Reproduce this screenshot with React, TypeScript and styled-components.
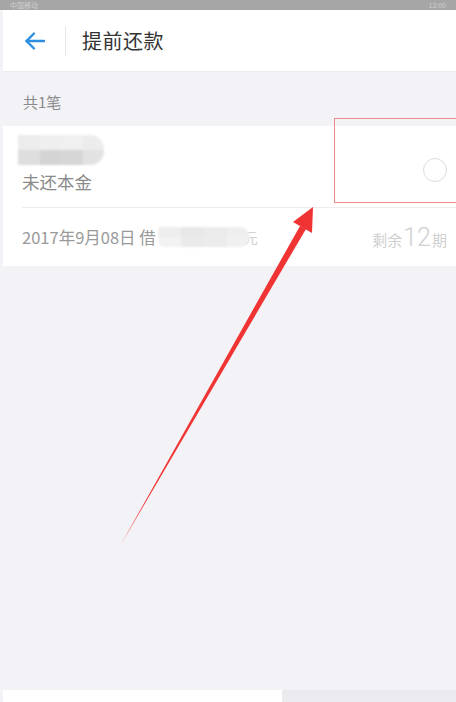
import React from "react";
import styled, { createGlobalStyle } from "styled-components";

const Global = createGlobalStyle`
  html, body { margin: 0; padding: 0; background: #f3f3f7; }
  body { font-family: "Noto Sans CJK SC", "Noto Sans", sans-serif; }
  * { box-sizing: border-box; }
`;

const Screen = styled.div`
  position: relative;
  width: 456px;
  height: 702px;
  overflow: hidden;
  background: #f3f3f7;
  display: flex;
  flex-direction: column;
`;

const StatusBar = styled.div`
  height: 10px;
  background: #a6a6a6;
  display: flex;
  align-items: center;
  justify-content: space-between;
  padding: 0 10px;
  font-size: 7px;
  line-height: 7px;
  color: #d0d0d0;
  overflow: hidden;
`;

const Body = styled.div`
  flex: 1;
  display: flex;
  flex-direction: column;
  padding-left: 3px;
`;

const Header = styled.div`
  height: 62px;
  background: #fff;
  display: flex;
  align-items: center;
  border-bottom: 1px solid #ececf0;
`;

const Back = styled.div`
  width: 62px;
  display: flex;
  align-items: center;
  padding-left: 20px;
`;

const VDivider = styled.div`
  width: 1px;
  height: 30px;
  background: #e6e6e6;
`;

const Title = styled.div`
  margin-left: 16px;
  font-size: 20px;
  color: #333;
  letter-spacing: 0.5px;
`;

const Count = styled.div`
  padding: 19px 0 0 20px;
  height: 54px;
  font-size: 15px;
  color: #8a8a8a;
`;

const Card = styled.div`
  background: #fff;
  display: flex;
  flex-direction: column;
`;

const TopRow = styled.div`
  height: 82px;
  margin-left: 19px;
  display: flex;
  align-items: center;
  justify-content: space-between;
  border-bottom: 1px solid #ededed;
  padding-right: 9px;
`;

const Info = styled.div`
  display: flex;
  flex-direction: column;
  gap: 4px;
  margin-top: -4px;
`;

const Mosaic = styled.div<{ w: number; h: number; cols: number }>`
  width: ${(p) => p.w}px;
  height: ${(p) => p.h}px;
  display: grid;
  grid-template-columns: repeat(${(p) => p.cols}, 1fr);
  border-radius: 0 14px 14px 0;
  overflow: hidden;
  filter: blur(0.8px);
`;

const Cell = styled.div<{ c: string }>`
  background: ${(p) => p.c};
`;

const Label = styled.div`
  font-size: 17.5px;
  color: #8a8a8a;
`;

const Radio = styled.div`
  width: 24px;
  height: 24px;
  border-radius: 50%;
  border: 1.5px solid #dcdcdc;
  margin-top: 6px;
`;

const BottomRow = styled.div`
  height: 58px;
  padding: 0 9px 0 19px;
  display: flex;
  align-items: center;
  justify-content: space-between;
`;

const DateText = styled.div`
  display: flex;
  align-items: center;
  font-size: 16.5px;
  color: #9a9a9a;
  gap: 2px;
`;

const Faint = styled.span`
  color: #d0d0d0;
  font-size: 14px;
  margin-left: -8px;
`;

const Remain = styled.div`
  color: #d0d0d0;
  font-size: 15px;
  display: flex;
  align-items: baseline;
`;

const Big = styled.span`
  font-size: 25px;
  font-family: "Roboto", "Noto Sans", sans-serif;
  font-weight: 300;
  margin: 0 1px;
`;

const Spacer = styled.div`
  flex: 1;
`;

const Footer = styled.div`
  height: 12px;
  display: flex;
`;

const FooterLeft = styled.div`
  width: 279px;
  background: #fff;
`;

const FooterRight = styled.div`
  flex: 1;
  background: #eaeaef;
`;

const HighlightBox = styled.div`
  position: absolute;
  left: 334px;
  top: 118px;
  width: 130px;
  height: 85px;
  border: 1.5px solid #f08a8a;
  pointer-events: none;
`;

const ArrowSvg = styled.svg`
  position: absolute;
  left: 0;
  top: 0;
  pointer-events: none;
`;

const topCells = ["#ececec", "#efefef", "#f0f0f0", "#ececec", "#dedede", "#d4d4d4", "#d6d6d6", "#e2e2e2"];
const dateCells = ["#eeeeee", "#e8e8e8", "#ebebeb", "#eeeeee", "#f2f2f2", "#eaeaea", "#ececec", "#f0f0f0"];

export default function App() {
  return (
    <>
      <Global />
      <Screen>
        <StatusBar>
          <span>中国移动</span>
          <span>12:00</span>
        </StatusBar>
        <Body>
          <Header>
            <Back>
              <svg width="24" height="24" viewBox="0 0 24 24" fill="none" stroke="#2f8ee0" strokeWidth="2.4" strokeLinecap="round" strokeLinejoin="round">
                <path d="M21 12H3.5" />
                <path d="M11 4.5L3.5 12L11 19.5" />
              </svg>
            </Back>
            <VDivider />
            <Title>提前还款</Title>
          </Header>
          <Count>共1笔</Count>
          <Card>
            <TopRow>
              <Info>
                <Mosaic w={86} h={30} cols={4} style={{ marginLeft: -4 }}>
                  {topCells.map((c, i) => (
                    <Cell key={i} c={c} />
                  ))}
                </Mosaic>
                <Label>未还本金</Label>
              </Info>
              <Radio />
            </TopRow>
            <BottomRow>
              <DateText>
                2017年9月08日 借
                <Mosaic w={92} h={20} cols={4} style={{ borderRadius: "0 10px 10px 6px" }}>
                  {dateCells.map((c, i) => (
                    <Cell key={i} c={c} />
                  ))}
                </Mosaic>
                <Faint>元</Faint>
              </DateText>
              <Spacer />
              <Remain>
                剩余<Big>12</Big>期
              </Remain>
            </BottomRow>
          </Card>
          <Spacer />
          <Footer>
            <FooterLeft />
            <FooterRight />
          </Footer>
        </Body>
        <HighlightBox />
        <ArrowSvg width="456" height="702" viewBox="0 0 456 702">
          <polygon points="120,546 300,226 306,229" fill="#f03434" />
          <polygon points="313,207 293,222 312,233" fill="#f03434" />
        </ArrowSvg>
      </Screen>
    </>
  );
}
